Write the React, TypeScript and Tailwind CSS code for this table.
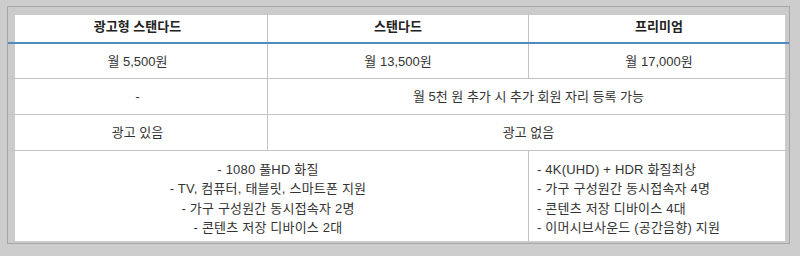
const FONT = "font-['Liberation_Sans','Noto_Sans_CJK_KR',sans-serif]";

export default function App() {
  return (
    <div className={`w-[800px] h-[256px] bg-[#cdcdcd] pt-[6px] pl-[7px] ${FONT}`}>
      <div className="w-[783px] h-[238px] border border-[#a6a6a6] bg-white shadow-[inset_7px_8px_0_#cbcbcb,inset_-4px_-2px_0_#cbcbcb] text-[13px] text-[#333]">
        {/* header */}
        <div className="grid grid-cols-[260px_261px_260px] h-[37px] border-b-2 border-[#4f8bc0] font-bold text-[#222] pt-[5px]">
          <div className="flex items-center justify-center border-r border-[#c4c4c4]">광고형 스탠다드</div>
          <div className="flex items-center justify-center border-r border-[#c4c4c4]">스탠다드</div>
          <div className="flex items-center justify-center">프리미엄</div>
        </div>

        {/* price */}
        <div className="grid grid-cols-[260px_261px_260px] h-[35px] border-b border-[#c4c4c4]">
          <div className="flex items-center justify-center border-r border-[#c4c4c4] pt-[1px]">월 5,500원</div>
          <div className="flex items-center justify-center border-r border-[#c4c4c4] pt-[1px]">월 13,500원</div>
          <div className="flex items-center justify-center pt-[1px]">월 17,000원</div>
        </div>

        {/* extra member */}
        <div className="grid grid-cols-[260px_521px] h-[36px] border-b border-[#c4c4c4]">
          <div className="flex items-center justify-center border-r border-[#c4c4c4]">-</div>
          <div className="flex items-center justify-center">월 5천 원 추가 시 추가 회원 자리 등록 가능</div>
        </div>

        {/* ads */}
        <div className="grid grid-cols-[260px_521px] h-[36px] border-b border-[#c4c4c4]">
          <div className="flex items-center justify-center border-r border-[#c4c4c4] pt-[1px]">광고 있음</div>
          <div className="flex items-center justify-center pt-[1px]">광고 없음</div>
        </div>

        {/* features */}
        <div className="grid grid-cols-[521px_260px] h-[92px] leading-[19.5px] tracking-[0.2px]">
          <div className="flex flex-col items-center justify-center border-r border-[#c4c4c4] pt-[3px]">
            <div>- 1080 풀HD 화질</div>
            <div>- TV, 컴퓨터, 태블릿, 스마트폰 지원</div>
            <div>- 가구 구성원간 동시접속자 2명</div>
            <div>- 콘텐츠 저장 디바이스 2대</div>
          </div>
          <div className="flex flex-col justify-center pl-[8px] pt-[3px]">
            <div>- 4K(UHD) + HDR 화질최상</div>
            <div>- 가구 구성원간 동시접속자 4명</div>
            <div>- 콘텐츠 저장 디바이스 4대</div>
            <div>- 이머시브사운드 (공간음향) 지원</div>
          </div>
        </div>
      </div>
    </div>
  );
}
